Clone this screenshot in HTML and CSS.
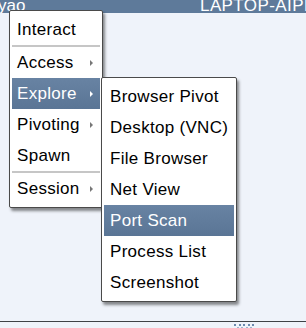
FILE: index.html
```html
<!DOCTYPE html>
<html lang="en">
    <head>
        <meta charset="utf-8">
        <title>Beacon menu</title>
        <link rel="stylesheet" href="styles.css">
    </head>
    <body>
        <div class="app">
            <div class="titlebar">
                <span class="titlebar__user">yao</span>
                <span class="titlebar__host">LAPTOP-AIPI</span>
            </div>

            <div class="canvas">
                <ul class="menu menu--main">
                    <li class="menu__item">Interact</li>
                    <li class="menu__sep"></li>
                    <li class="menu__item menu__item--sub">Access</li>
                    <li class="menu__item menu__item--sub active">Explore</li>
                    <li class="menu__item menu__item--sub">Pivoting</li>
                    <li class="menu__item">Spawn</li>
                    <li class="menu__sep"></li>
                    <li class="menu__item menu__item--sub">Session</li>
                </ul>

                <ul class="menu menu--explore">
                    <li class="menu__item">Browser Pivot</li>
                    <li class="menu__item">Desktop (VNC)</li>
                    <li class="menu__item">File Browser</li>
                    <li class="menu__item">Net View</li>
                    <li class="menu__item active">Port Scan</li>
                    <li class="menu__item">Process List</li>
                    <li class="menu__item">Screenshot</li>
                </ul>
            </div>

            <div class="statusbar">
                <svg class="grip" width="24" height="6" viewBox="0 0 24 6">
                    <rect x="0" y="1" width="2" height="2" fill="#6c89ad"/>
                    <rect x="5" y="1" width="2" height="2" fill="#6c89ad"/>
                    <rect x="9" y="1" width="2" height="2" fill="#6c89ad"/>
                    <rect x="14" y="1" width="2" height="2" fill="#6c89ad"/>
                    <rect x="18" y="1" width="2" height="2" fill="#6c89ad"/>
                    <rect x="3" y="4" width="2" height="2" fill="#9fb2cc"/>
                    <rect x="7" y="4" width="2" height="2" fill="#9fb2cc"/>
                    <rect x="12" y="4" width="2" height="2" fill="#9fb2cc"/>
                    <rect x="16" y="4" width="2" height="2" fill="#9fb2cc"/>
                </svg>
            </div>
        </div>
    </body>
</html>
```

FILE: styles.css
```css
* {
    box-sizing: border-box;
}

body {
    margin: 0;
    padding: 0;
    background-color: #eff3fa;
    font-family: "Liberation Sans", Arial, sans-serif;
}

.app {
    width: 306px;
    height: 328px;
    display: flex;
    flex-direction: column;
    overflow: hidden;
}

.titlebar {
    height: 13px;
    flex: none;
    display: flex;
    justify-content: space-between;
    align-items: flex-end;
    background-color: #5e7a9a;
    color: #fff;
    font-size: 17px;
    line-height: 13px;
    overflow: hidden;
}

.titlebar__user {
    margin-left: -2px;
    margin-bottom: 1px;
}

.titlebar__host {
    margin-right: -3px;
    margin-bottom: 1px;
    letter-spacing: 0.4px;
}

.canvas {
    flex: 1;
    position: relative;
}

.statusbar {
    height: 7px;
    flex: none;
    border-top: 1px solid #3f4246;
    display: flex;
    justify-content: flex-end;
    padding-right: 48px;
}

.grip {
    display: block;
    margin-top: 1px;
}

.menu {
    position: absolute;
    margin: 0;
    padding: 3px 2px;
    list-style: none;
    background-color: #fff;
    border: 1px solid #4a4a4a;
    border-radius: 2px;
    box-shadow: 2px 3px 3px rgba(0,0,0,0.45);
    font-size: 17px;
    letter-spacing: 0.3px;
    color: #000;
}

.menu--main {
    left: 9px;
    top: -3px;
    width: 94px;
}

.menu--explore {
    left: 101px;
    top: 64px;
    width: 136px;
}

.menu__item {
    position: relative;
    height: 31px;
    line-height: 31px;
    padding-left: 5px;
    white-space: nowrap;
}

.menu--explore .menu__item {
    padding-left: 6px;
}

.menu__item.active {
    background: linear-gradient(#6883a3, #5a7595);
    color: #fff;
}

.menu__item--sub::after {
    content: "";
    position: absolute;
    right: 7px;
    top: 13px;
    border-left: 3px solid #777;
    border-top: 3px solid transparent;
    border-bottom: 3px solid transparent;
}

.menu__item--sub.active::after {
    border-left-color: #fff;
}

.menu__sep {
    height: 2px;
    background-color: #c6c6c6;
}
```
